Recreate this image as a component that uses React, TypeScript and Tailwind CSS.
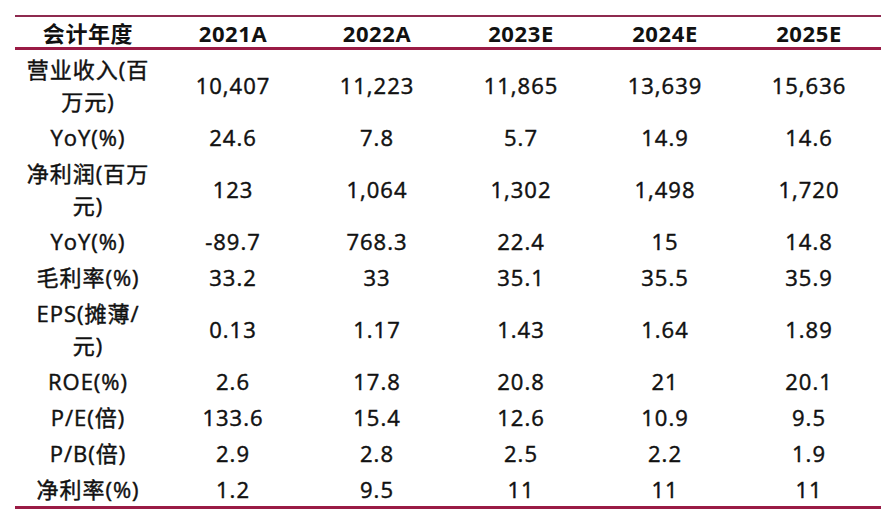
import React from "react";

const rows: { label: React.ReactNode; vals: string[] }[] = [
  { label: <>营业收入(百<br />万元)</>, vals: ["10,407", "11,223", "11,865", "13,639", "15,636"] },
  { label: "YoY(%)", vals: ["24.6", "7.8", "5.7", "14.9", "14.6"] },
  { label: <>净利润(百万<br />元)</>, vals: ["123", "1,064", "1,302", "1,498", "1,720"] },
  { label: "YoY(%)", vals: ["-89.7", "768.3", "22.4", "15", "14.8"] },
  { label: "毛利率(%)", vals: ["33.2", "33", "35.1", "35.5", "35.9"] },
  { label: <>EPS(摊薄/<br />元)</>, vals: ["0.13", "1.17", "1.43", "1.64", "1.89"] },
  { label: "ROE(%)", vals: ["2.6", "17.8", "20.8", "21", "20.1"] },
  { label: "P/E(倍)", vals: ["133.6", "15.4", "12.6", "10.9", "9.5"] },
  { label: "P/B(倍)", vals: ["2.9", "2.8", "2.5", "2.2", "1.9"] },
  { label: "净利率(%)", vals: ["1.2", "9.5", "11", "11", "11"] },
];

const headers = ["2021A", "2022A", "2023E", "2024E", "2025E"];

export default function App() {
  return (
    <div
      className="w-[896px] h-[526px] bg-white pt-[15px] pl-[15px] text-[#111111]"
      style={{ fontFamily: '"Open Sans", "Noto Sans CJK SC", sans-serif' }}
    >
      <div className="w-[866px] border-t-2 border-t-[#8e2a4f] border-b-[3px] border-b-[#9a1b45]">
        <div className="grid grid-cols-[146px_repeat(5,144px)] h-[33px] items-center border-b-[3px] border-b-[#9a1b45] text-[22px] font-bold leading-[32px] tracking-[0.6px]">
          <div className="text-center">会计年度</div>
          {headers.map((h) => (
            <div key={h} className="text-center">{h}</div>
          ))}
        </div>
        {rows.map((r, i) => (
          <div
            key={i}
            className="grid grid-cols-[146px_repeat(5,144px)] items-center pt-[3px] pb-[1px] text-[22px] leading-[32px] font-normal tracking-[1px] [-webkit-text-stroke:0.45px_#111111]"
          >
            <div className="text-center">{r.label}</div>
            {r.vals.map((v, j) => (
              <div key={j} className="text-center">{v}</div>
            ))}
          </div>
        ))}
      </div>
    </div>
  );
}
